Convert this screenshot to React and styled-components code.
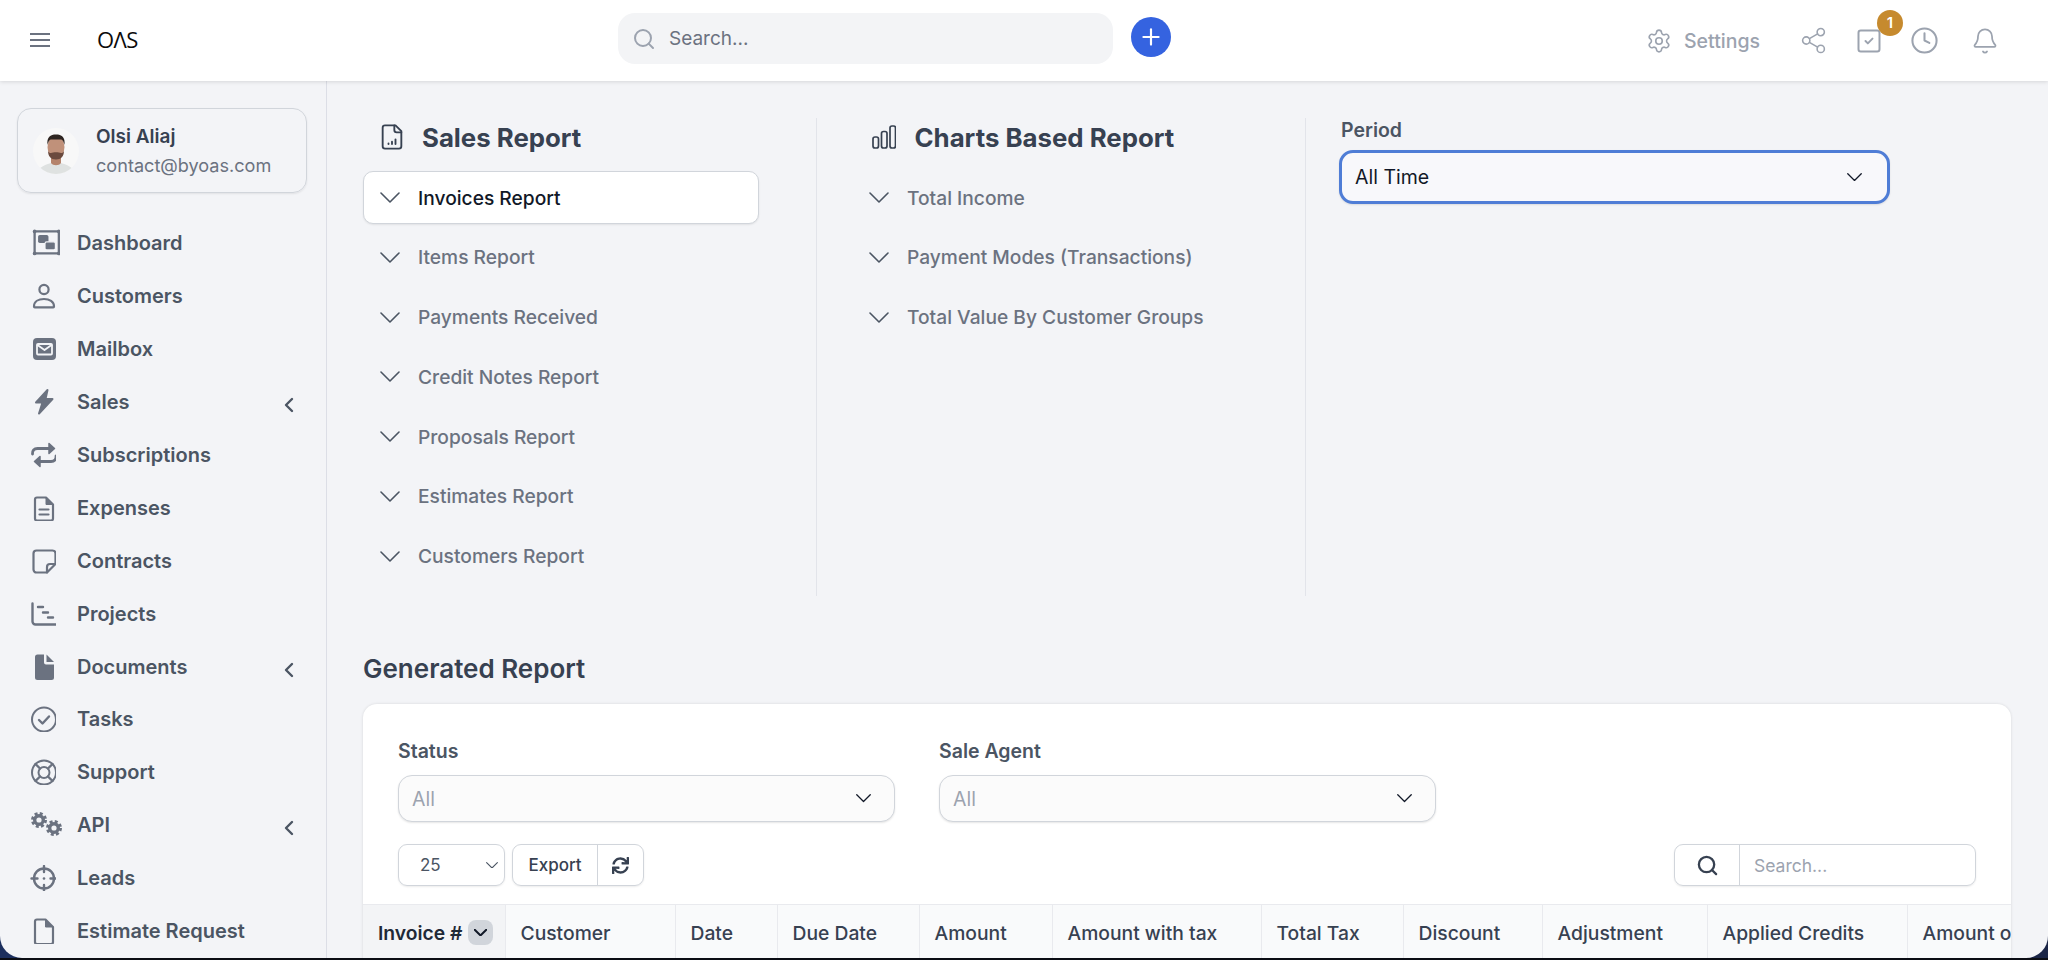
import React from 'react';
import styled, { createGlobalStyle } from 'styled-components';
import { Settings, Share2, SquareCheck, Clock, Bell, Search, Plus } from 'lucide-react';
import { FaSync } from 'react-icons/fa';

const Global = createGlobalStyle`
  html, body { margin: 0; padding: 0; height: 100%; overflow: hidden; background: #000; }
  #root { height: 960px; }
  * { box-sizing: border-box; }
  body { font-family: Inter, "Liberation Sans", sans-serif; }
`;

const Desktop = styled.div`
  height: 960px;
  background: linear-gradient(90deg, #1c2f5e, #1a2547);
  border-bottom: 2px solid #0b0d14;
`;
const Frame = styled.div`
  height: 958px;
  display: flex;
  flex-direction: column;
  background: #f3f4f7;
  border-radius: 0 0 22px 22px;
  overflow: hidden;
`;
const Topbar = styled.header`
  height: 81px;
  flex: none;
  display: flex;
  align-items: center;
  background: #fff;
  box-shadow: 0 1px 4px rgba(0, 0, 0, 0.12);
  position: relative;
  z-index: 2;
`;
const Burger = styled.div`
  margin-left: 30px;
  width: 20px;
  display: flex;
  flex-direction: column;
  gap: 4.8px;
  margin-top: -1px;
  span { display: block; height: 1.4px; background: #6b7280; }
`;
const Logo = styled.div`
  margin-left: 47px;
  width: 42px;
  font-family: "Open Sans", Inter, sans-serif;
  font-size: 22px;
  font-weight: 500;
  letter-spacing: -0.6px;
  white-space: nowrap;
  color: #0b0b0b;
  line-height: 1;
  margin-top: -3px;
`;
const TopSearch = styled.div`
  margin-left: 479px;
  width: 495px;
  height: 51px;
  margin-top: -4px;
  display: flex;
  align-items: center;
  gap: 11px;
  padding-left: 14px;
  border-radius: 17px;
  background: #f3f4f6;
  color: #9ca3af;
`;
const TopSearchInput = styled.input`
  border: 0;
  background: transparent;
  outline: none;
  font: 400 19px Inter, sans-serif;
  color: #6b7280;
  flex: 1;
  &::placeholder { color: #6b7280; opacity: 1; }
`;
const AddButton = styled.div`
  margin-left: 18px;
  width: 40px;
  height: 40px;
  margin-top: -7px;
  border-radius: 50%;
  background: #3563e0;
  color: #fff;
  display: flex;
  align-items: center;
  justify-content: center;
`;
const TopActions = styled.div`
  margin-left: auto;
  margin-right: 49px;
  display: flex;
  align-items: center;
  color: #9ca3af;
`;
const SettingsLink = styled.div`
  display: flex;
  align-items: center;
  gap: 12px;
  font-size: 19.5px;
  font-weight: 500;
  margin-right: 39px;
`;
const TopIcon = styled.div`
  position: relative;
  display: flex;
  margin-left: ${(p) => p.$gap || 0}px;
`;
const Badge = styled.span`
  position: absolute;
  top: -17px;
  right: -20px;
  width: 26px;
  height: 26px;
  border-radius: 50%;
  background: #c68a2e;
  color: #fff;
  font-size: 15px;
  font-weight: 600;
  display: flex;
  align-items: center;
  justify-content: center;
`;
const Body = styled.div`
  flex: 1;
  min-height: 0;
  display: flex;
`;
const Sidebar = styled.aside`
  width: 327px;
  flex: none;
  border-right: 1.5px solid #dcdee6;
  padding-top: 27px;
  overflow: hidden;
`;
const UserCard = styled.div`
  margin-left: 17px;
  width: 290px;
  height: 85px;
  display: flex;
  align-items: center;
  padding-left: 15px;
  gap: 17px;
  border: 1.5px solid #d1d5db;
  border-radius: 14px;
  box-shadow: 0 1px 2px rgba(0, 0, 0, 0.08);
`;
const UserText = styled.div`
  display: flex;
  flex-direction: column;
  gap: 4px;
`;
const UserName = styled.div`
  font-size: 19px;
  font-weight: 600;
  color: #374151;
  line-height: 24px;
`;
const UserMail = styled.div`
  font-size: 18.1px;
  color: #6b7280;
  line-height: 24px;
`;
const Nav = styled.nav`
  margin-top: 24px;
`;
const NavItem = styled.div`
  height: 52.9px;
  display: flex;
  align-items: center;
  padding: 0 32px 0 30px;
  font-size: 20px;
  font-weight: 600;
  color: #4b5563;
`;
const NavGlyph = styled.span`
  width: 47px;
  flex: none;
  display: flex;
  color: #6b7280;
`;
const NavArrow = styled.svg`
  margin-left: auto;
  margin-top: 6px;
  width: 10px;
  height: 16px;
  fill: none;
  stroke: #4b5563;
  stroke-width: 2.4;
  stroke-linecap: round;
  stroke-linejoin: round;
`;
const Main = styled.main`
  flex: 1;
  min-width: 0;
  padding: 37px 37px 0 36px;
  overflow: hidden;
`;
const ReportArea = styled.section`
  display: flex;
  height: 478px;
`;
const ReportColumn = styled.div`
  flex: none;
  width: ${(p) => p.$width}px;
  padding: ${(p) => p.$pad};
  ${(p) => p.$line && 'border-right: 1.5px solid #e2e4ea;'}
`;
const SectionHead = styled.div`
  height: 38px;
  margin-bottom: 15px;
  display: flex;
  align-items: center;
  color: #374151;
  padding-left: ${(p) => p.$indent}px;
  gap: ${(p) => p.$gap}px;
`;
const SectionTitle = styled.h2`
  margin: 0;
  font-size: 25.8px;
  font-weight: 700;
  color: #374151;
`;
const ReportRow = styled.div`
  height: 53px;
  margin-bottom: 6.8px;
  display: flex;
  align-items: center;
  gap: ${(p) => p.$gap}px;
  padding-left: ${(p) => p.$indent}px;
  font-size: 19.2px;
  font-weight: 500;
  border-radius: 10px;
  color: ${(p) => (p.$active ? '#111827' : '#6b7280')};
  ${(p) => p.$active && 'background: #fff; border: 1.5px solid #d1d5db; box-shadow: 0 1px 2px rgba(0,0,0,.08);'}
  svg { color: #4b5563; }
`;
const FieldLabel = styled.div`
  font-size: 19.5px;
  font-weight: 600;
  color: #4b5563;
  line-height: 24px;
  margin-bottom: ${(p) => p.$gap || 12}px;
`;
const PeriodLabel = styled(FieldLabel)`
  padding-left: 2px;
`;
const SelectBox = styled.div`
  width: ${(p) => p.$width}px;
  height: ${(p) => p.$height}px;
  display: flex;
  align-items: center;
  justify-content: space-between;
  padding: 0 ${(p) => (p.$focus ? 25 : 23)}px 0 ${(p) => (p.$focus ? 13 : 13)}px;
  font-size: 19.5px;
  border-radius: 14px;
  background: ${(p) => (p.$focus ? '#f8f8fb' : '#fbfbfb')};
  color: ${(p) => (p.$focus ? '#111827' : '#9ca3af')};
  border: ${(p) => (p.$focus ? '3px solid #4f7dd6' : '1.5px solid #d1d5db')};
  box-shadow: 0 1px 2px rgba(0, 0, 0, 0.1);
  svg { color: #111827; }
`;
const GeneratedTitle = styled.h2`
  margin: 57px 0 19px;
  font-size: 26px;
  font-weight: 600;
  line-height: 32px;
  color: #374151;
`;
const Card = styled.div`
  background: #fff;
  border-radius: 14px 14px 0 0;
  box-shadow: 0 0 3px rgba(0, 0, 0, 0.12);
  overflow: hidden;
  padding-top: 35px;
`;
const Filters = styled.div`
  display: flex;
  gap: 44px;
  padding: 0 35px;
`;
const Toolbar = styled.div`
  margin: 22px 35px 18px;
  height: 42px;
  display: flex;
  align-items: stretch;
  gap: 7px;
`;
const PageSize = styled.div`
  width: 107px;
  display: flex;
  align-items: center;
  justify-content: space-between;
  padding: 0 6px 0 21px;
  font-size: 17px;
  color: #4b5563;
  border: 1.5px solid #d1d5db;
  border-radius: 9px;
  box-shadow: 0 1px 2px rgba(0, 0, 0, 0.08);
`;
const ButtonGroup = styled.div`
  display: flex;
  border: 1.5px solid #d1d5db;
  border-radius: 9px;
  box-shadow: 0 1px 2px rgba(0, 0, 0, 0.08);
  color: #374151;
`;
const GroupCell = styled.div`
  width: ${(p) => p.$width}px;
  display: flex;
  align-items: center;
  justify-content: center;
  font-size: 17px;
  font-weight: 500;
  ${(p) => p.$line && 'border-right: 1.5px solid #d1d5db;'}
`;
const TableSearch = styled(ButtonGroup)`
  margin-left: auto;
  width: 302px;
`;
const TableSearchInput = styled.input`
  flex: 1;
  min-width: 0;
  border: 0;
  outline: none;
  background: transparent;
  padding-left: 14px;
  font: 400 17.5px Inter, sans-serif;
  &::placeholder { color: #9ca3af; opacity: 1; }
`;
const TableHead = styled.div`
  display: grid;
  grid-template-columns: 142px 170px 102px 142px 133px 209px 142px 139px 165px 200px 1fr;
  height: 60px;
  background: #f9fafb;
  border-top: 1.5px solid #e9eaee;
  overflow: hidden;
`;
const HeadCell = styled.div`
  display: flex;
  align-items: center;
  gap: 6px;
  padding: 0 0 4px ${(p) => (p.$sorted ? 15 : 14.5)}px;
  font-size: 19.3px;
  font-weight: ${(p) => (p.$sorted ? 600 : 500)};
  white-space: nowrap;
  overflow: hidden;
  color: ${(p) => (p.$sorted ? '#1f2937' : '#374151')};
  background: ${(p) => (p.$sorted ? '#f3f4f6' : 'transparent')};
  border-left: ${(p) => (p.$first ? 0 : '1.5px solid #e9eaee')};
`;
const SortChip = styled.span`
  width: 25px;
  height: 25px;
  flex: none;
  border-radius: 8px;
  background: #d1d5db;
  display: flex;
  align-items: center;
  justify-content: center;
  color: #111827;
`;

const Chevron = ({ w = 20, stroke = 1.6 }) => (
  <svg width={w} height={w * 0.55} viewBox="0 0 20 11" fill="none" stroke="currentColor" strokeWidth={stroke * (20 / w)} strokeLinecap="round" strokeLinejoin="round">
    <polyline points="1,1 10,10 19,1" />
  </svg>
);

const Ico = ({ w = 26, h = 26, vb = '0 0 26 26', sw = 2.2, children }) => (
  <svg width={w} height={h} viewBox={vb} fill="none" stroke="currentColor" strokeWidth={sw} strokeLinecap="round" strokeLinejoin="round">
    {children}
  </svg>
);

const icons = {
  dashboard: (
    <Ico w={30} h={30}>
      <rect x="4" y="3" width="21" height="19" rx="1" strokeWidth="2" />
      <rect x="7" y="6" width="9" height="7" rx="1.500" fill="currentColor" stroke="none" />
      <rect x="13" y="12" width="9" height="7" rx="1.500" fill="currentColor" stroke="#f3f4f7" strokeWidth="1" />
      <circle cx="4" cy="3" r="1.600" fill="currentColor" stroke="none" />
      <circle cx="25" cy="3" r="1.600" fill="currentColor" stroke="none" />
      <circle cx="4" cy="22" r="1.600" fill="currentColor" stroke="none" />
      <circle cx="25" cy="22" r="1.600" fill="currentColor" stroke="none" />
    </Ico>
  ),
  user: (
    <Ico>
      <circle cx="14" cy="6.500" r="4.600" />
      <path d="M4 23.500c0-5 4.500-7.500 10-7.500s10 2.500 10 7.500c0 .5-.3.8-.8.8H4.800c-.5 0-.8-.3-.8-.8z" />
    </Ico>
  ),
  mail: (
    <Ico>
      <rect x="3" y="2" width="23" height="22" rx="4" fill="currentColor" stroke="none" />
      <rect x="7" y="8" width="15" height="10.500" rx="1" fill="none" stroke="#f3f4f7" strokeWidth="1.800" />
      <path d="M7.500 9l7 5 7-5" stroke="#f3f4f7" strokeWidth="1.800" />
    </Ico>
  ),
  bolt: (
    <Ico w={26} h={28} vb="0 0 26 28">
      <path d="M17.500 2L6 14.500h6.500L9 25.500 22.500 11h-7L17.500 2z" fill="currentColor" strokeWidth="2" />
    </Ico>
  ),
  repeat: (
    <Ico sw={2.8}>
      <path d="M2.500 12c-.3-3.500 1.500-5.500 5-5.500h13" />
      <path d="M19 1.500l5.500 5-5.500 5z" fill="currentColor" strokeWidth="1.500" />
      <path d="M26 14c.3 3.500-1.500 5.500-5 5.500H9" />
      <path d="M10 14.500l-5.500 5 5.500 5z" fill="currentColor" strokeWidth="1.500" />
    </Ico>
  ),
  fileLines: (
    <Ico>
      <path d="M5 4.500a2 2 0 0 1 2-2h9l7 7v14a2 2 0 0 1-2 2H7a2 2 0 0 1-2-2z" strokeWidth="2.200" />
      <path d="M16 2.500v7h7" fill="currentColor" strokeWidth="1" />
      <path d="M9.500 14.500h9M9.500 19.500h9" />
    </Ico>
  ),
  note: (
    <Ico>
      <path d="M17 24.500H6.500a3 3 0 0 1-3-3v-16a3 3 0 0 1 3-3h16a3 3 0 0 1 3 3V16z" />
      <path d="M17 24.500V19a3 3 0 0 1 3-3h5.500" />
    </Ico>
  ),
  projects: (
    <Ico sw={2.4}>
      <path d="M2.500 2.500v18a3 3 0 0 0 3 3H26" />
      <path d="M8 6h5M13 11.500h5M18 16.500h5" />
    </Ico>
  ),
  docSolid: (
    <Ico sw={0}>
      <path d="M5 3a2.500 2.500 0 0 1 2.500-2.500H14V8.500a2 2 0 0 0 2 2h8v13a2.500 2.500 0 0 1-2.500 2.500h-14A2.500 2.500 0 0 1 5 23.500z" fill="currentColor" stroke="none" />
      <path d="M16.500.5l7.500 7.500h-7.500z" fill="currentColor" stroke="none" />
    </Ico>
  ),
  check: (
    <Ico sw={2}>
      <circle cx="14" cy="13.500" r="12" />
      <path d="M9 14l3.500 3.500L19 10.500" strokeWidth="2.400" />
    </Ico>
  ),
  support: (
    <Ico sw={2}>
      <circle cx="14" cy="13.500" r="12" />
      <circle cx="14" cy="13.500" r="5.500" />
      <path d="M5.500 5l4.500 4.500M22.500 5L18 9.500M5.500 22l4.500-4.500M22.500 22L18 17.500" strokeWidth="2.400" />
    </Ico>
  ),
  api: (
    <svg width="36" height="28" viewBox="0 0 36 28" fill="none" stroke="currentColor">
      <circle cx="9" cy="9" r="6.500" strokeWidth="3" strokeDasharray="2.900 2.200" />
      <circle cx="9" cy="9" r="4.300" strokeWidth="3.400" />
      <circle cx="24" cy="17" r="6.500" strokeWidth="3" strokeDasharray="2.900 2.200" />
      <circle cx="24" cy="17" r="4.300" strokeWidth="3.400" />
    </svg>
  ),
  leads: (
    <Ico sw={2.4}>
      <circle cx="14" cy="13.500" r="10" />
      <path d="M14 1v6M14 20v6M1.500 13.500h6M20.500 13.500h6" />
      <circle cx="14" cy="13.500" r="1.300" fill="currentColor" stroke="none" />
    </Ico>
  ),
  file: (
    <Ico>
      <path d="M5 3.500a2 2 0 0 1 2-2h8.500l7.500 7.500v15a2 2 0 0 1-2 2H7a2 2 0 0 1-2-2z" />
      <path d="M15.500 1.500v7.500H23" fill="currentColor" strokeWidth="1" />
    </Ico>
  ),
};

const navItems = [
  ['Dashboard', 'dashboard'],
  ['Customers', 'user'],
  ['Mailbox', 'mail'],
  ['Sales', 'bolt', true],
  ['Subscriptions', 'repeat'],
  ['Expenses', 'fileLines'],
  ['Contracts', 'note'],
  ['Projects', 'projects'],
  ['Documents', 'docSolid', true],
  ['Tasks', 'check'],
  ['Support', 'support'],
  ['API', 'api', true],
  ['Leads', 'leads'],
  ['Estimate Request', 'file'],
];
const salesRows = ['Invoices Report', 'Items Report', 'Payments Received', 'Credit Notes Report', 'Proposals Report', 'Estimates Report', 'Customers Report'];
const chartRows = ['Total Income', 'Payment Modes (Transactions)', 'Total Value By Customer Groups'];
const columns = ['Customer', 'Date', 'Due Date', 'Amount', 'Amount with tax', 'Total Tax', 'Discount', 'Adjustment', 'Applied Credits', 'Amount open'];

const Avatar = () => (
  <svg width="46" height="46" viewBox="0 0 46 46">
    <defs>
      <clipPath id="av"><circle cx="23" cy="23" r="23" /></clipPath>
    </defs>
    <g clipPath="url(#av)">
      <rect width="46" height="46" fill="#f8f8f8" />
      <path d="M4 46c1-7 8-9 14-11h10c6 2 13 4 14 11z" fill="#dfe2e1" />
      <path d="M18 28h10v7c-2 3-8 3-10 0z" fill="#b5836b" />
      <ellipse cx="23" cy="19" rx="8.500" ry="11.500" fill="#c0917a" />
      <path d="M15 23c1 2 2 2 3 2 2-1 8-1 10 0 1 0 2 0 3-2 0 5-3 8.500-8 8.500s-8-3.500-8-8.500z" fill="#6b4a3e" />
      <path d="M14.500 17c-1-8 3-10.500 8.500-10.500S32.500 9 31.500 17c-1-4-2-5.500-4-5.500h-9c-2 0-3 1.500-4 5.500z" fill="#2e2521" />
    </g>
  </svg>
);

export default function App() {
  return (
    <>
      <Global />
      <Desktop>
        <Frame>
          <Topbar>
            <Burger><span /><span /><span /></Burger>
            <Logo>OΛS</Logo>
            <TopSearch>
              <Search size={24} strokeWidth={2} />
              <TopSearchInput placeholder="Search..." />
            </TopSearch>
            <AddButton><Plus size={26} strokeWidth={2} /></AddButton>
            <TopActions>
              <SettingsLink><Settings size={26} strokeWidth={1.5} />Settings</SettingsLink>
              <TopIcon><Share2 size={29} strokeWidth={1.3} /></TopIcon>
              <TopIcon $gap={27}>
                <SquareCheck size={28} strokeWidth={1.7} />
                <Badge>1</Badge>
              </TopIcon>
              <TopIcon $gap={27}><Clock size={29} strokeWidth={1.7} /></TopIcon>
              <TopIcon $gap={32}><Bell size={28} strokeWidth={1.5} /></TopIcon>
            </TopActions>
          </Topbar>
          <Body>
            <Sidebar>
              <UserCard>
                <Avatar />
                <UserText>
                  <UserName>Olsi Aliaj</UserName>
                  <UserMail>contact@byoas.com</UserMail>
                </UserText>
              </UserCard>
              <Nav>
                {navItems.map(([label, icon, arrow]) => (
                  <NavItem key={label}>
                    <NavGlyph>{icons[icon]}</NavGlyph>
                    {label}
                    {arrow && (
                      <NavArrow viewBox="0 0 10 16"><polyline points="8,2 2,8 8,14" /></NavArrow>
                    )}
                  </NavItem>
                ))}
              </Nav>
            </Sidebar>
            <Main>
              <ReportArea>
                <ReportColumn $width={454} $pad="0 57px 0 0" $line>
                  <SectionHead $indent={15} $gap={16}>
                    <svg width="28" height="28" viewBox="0 0 24 24" fill="none" stroke="currentColor" strokeWidth="1.600" strokeLinecap="round" strokeLinejoin="round">
                      <path d="M15 2H6a2 2 0 0 0-2 2v16a2 2 0 0 0 2 2h12a2 2 0 0 0 2-2V7Z" />
                      <path d="M14 2v4a2 2 0 0 0 2 2h4" />
                      <path d="M9 18v-.5M12 18v-2M15 18v-4" />
                    </svg>
                    <SectionTitle>Sales Report</SectionTitle>
                  </SectionHead>
                  {salesRows.map((r, i) => (
                    <ReportRow key={r} $active={i === 0} $indent={i === 0 ? 16 : 17} $gap={18}>
                      <Chevron />
                      {r}
                    </ReportRow>
                  ))}
                </ReportColumn>
                <ReportColumn $width={489} $pad="0 0 0 52px" $line>
                  <SectionHead $indent={3} $gap={18.5}>
                    <svg width="24" height="24" viewBox="0 0 24 24" fill="none" stroke="currentColor" strokeWidth="1.700">
                      <rect x="1" y="12" width="5.500" height="11" rx="2" />
                      <rect x="9.500" y="6.500" width="5.500" height="16.500" rx="2" />
                      <rect x="18" y="1" width="5.500" height="22" rx="2" />
                    </svg>
                    <SectionTitle>Charts Based Report</SectionTitle>
                  </SectionHead>
                  {chartRows.map((r) => (
                    <ReportRow key={r} $indent={0} $gap={18}>
                      <Chevron />
                      {r}
                    </ReportRow>
                  ))}
                </ReportColumn>
                <ReportColumn $width={600} $pad="0 0 0 33px">
                  <PeriodLabel $gap={8}>Period</PeriodLabel>
                  <SelectBox $focus $width={551} $height={54}>
                    All Time
                    <Chevron w={15} stroke={1.300} />
                  </SelectBox>
                </ReportColumn>
              </ReportArea>
              <GeneratedTitle>Generated Report</GeneratedTitle>
              <Card>
                <Filters>
                  <div>
                    <FieldLabel>Status</FieldLabel>
                    <SelectBox $width={497} $height={47}>All<Chevron w={15} stroke={1.300} /></SelectBox>
                  </div>
                  <div>
                    <FieldLabel>Sale Agent</FieldLabel>
                    <SelectBox $width={497} $height={47}>All<Chevron w={15} stroke={1.300} /></SelectBox>
                  </div>
                </Filters>
                <Toolbar>
                  <PageSize>25<Chevron w={12} stroke={1.100} /></PageSize>
                  <ButtonGroup>
                    <GroupCell $width={85} $line>Export</GroupCell>
                    <GroupCell $width={45}><FaSync size={17} /></GroupCell>
                  </ButtonGroup>
                  <TableSearch>
                    <GroupCell $width={65} $line><Search size={23} strokeWidth={2.400} /></GroupCell>
                    <TableSearchInput placeholder="Search..." />
                  </TableSearch>
                </Toolbar>
                <TableHead>
                  <HeadCell $first $sorted>
                    Invoice #
                    <SortChip><Chevron w={13} stroke={2} /></SortChip>
                  </HeadCell>
                  {columns.map((c) => <HeadCell key={c}>{c}</HeadCell>)}
                </TableHead>
              </Card>
            </Main>
          </Body>
        </Frame>
      </Desktop>
    </>
  );
}
